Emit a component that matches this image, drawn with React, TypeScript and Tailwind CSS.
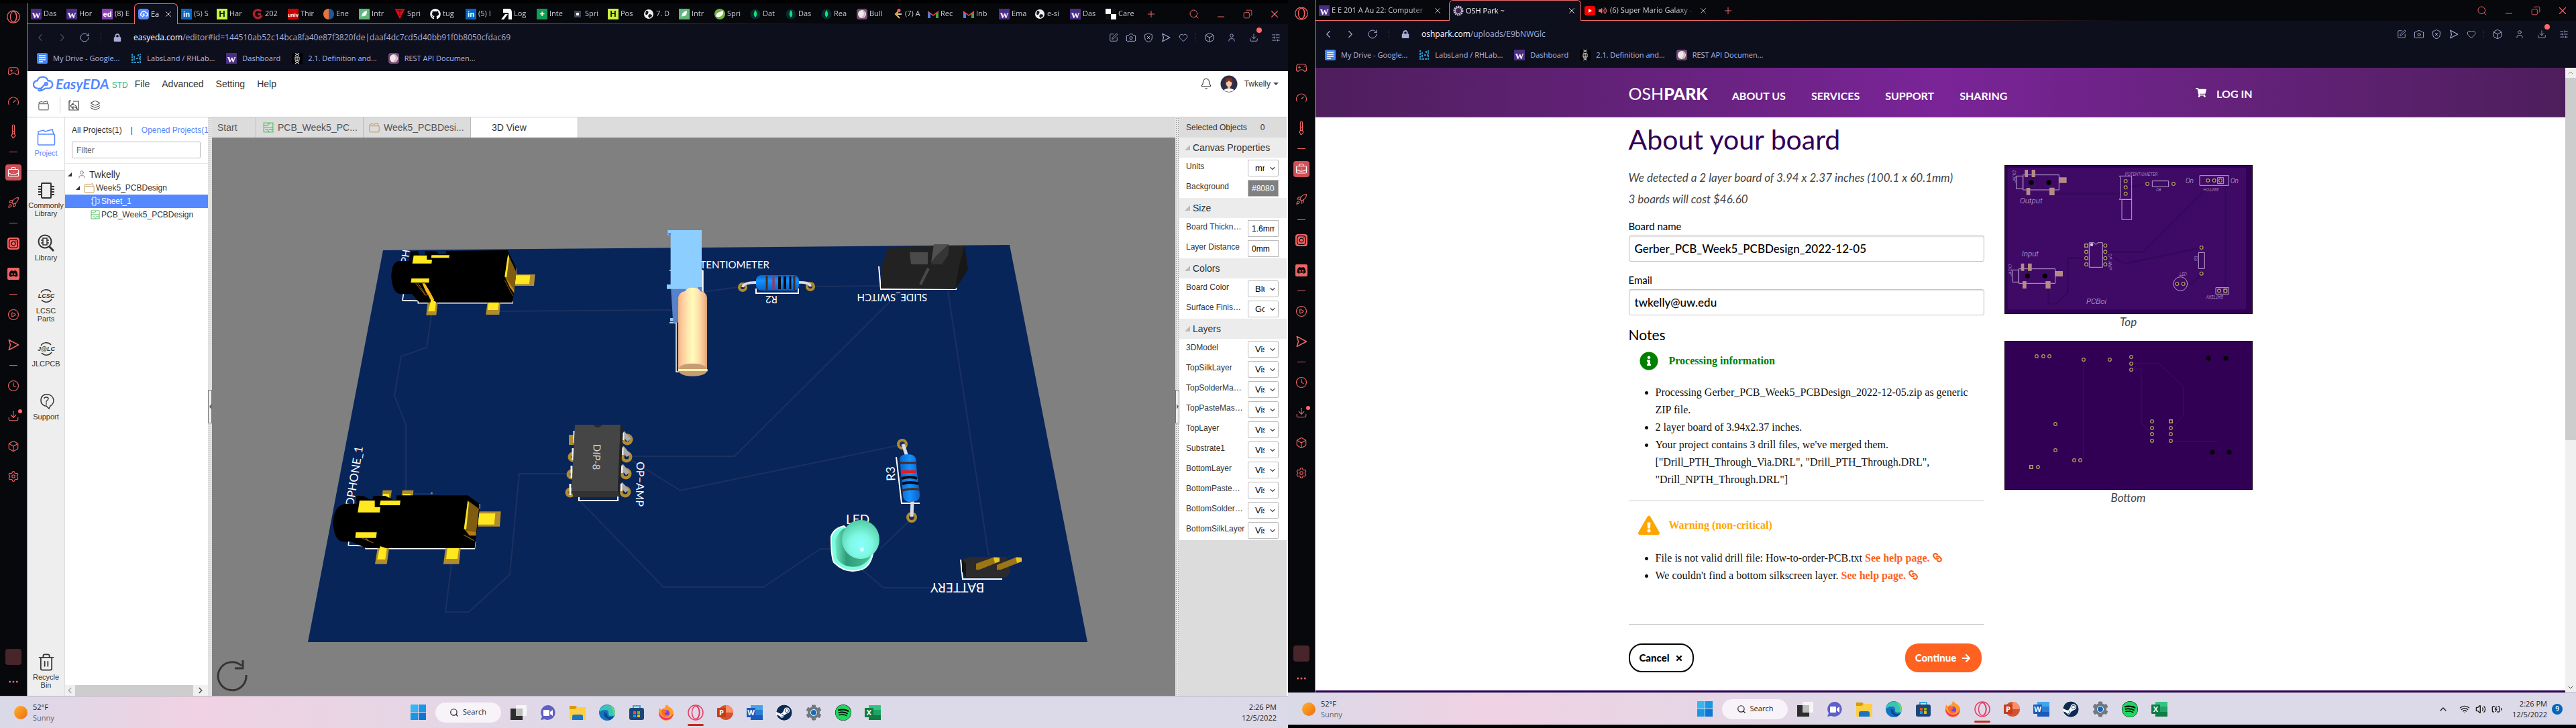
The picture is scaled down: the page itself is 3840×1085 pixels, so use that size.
import type { ReactNode } from "react";
import {
  Bell, Box, Brush, Camera, ChevronDown, ChevronLeft, ChevronRight, ChevronUp, Clock, CirclePlay, Copy,
  Download, Gamepad2, Gauge, Heart, Layers, Minus, Plus, Rocket, RotateCw, Search, Settings,
  ShieldX, SlidersHorizontal, SquarePen, Trash2, User, Volume2, Wifi, X, Ellipsis, BriefcaseBusiness,
  BatteryCharging,
} from "lucide-react";
import {
  FaArrowRight, FaDiscord, FaExclamationTriangle, FaGithub, FaInfoCircle, FaInstagram, FaLink, FaLock,
  FaShoppingCart, FaSpotify, FaSteam, FaTimes, FaVolumeUp, FaCog,
} from "react-icons/fa";

/* ---------- favicons ---------- */

function Letter({ bg, fg, children, serif }: { bg: string; fg: string; children: string; serif?: boolean }) {
  return (
    <svg viewBox="0 0 16 16" className="size-4 shrink-0" aria-hidden="true">
      <rect width="16" height="16" fill={bg} />
      <text x="8" y={serif ? 14 : 12} textAnchor="middle" fontSize={children.length > 2 ? 8 : children.length > 1 ? 11 : 13}
        fontWeight="bold" fill={fg} fontFamily={serif ? "Liberation Serif, serif" : "Liberation Sans, sans-serif"}>
        {children}
      </text>
    </svg>
  );
}

function Fav({ kind }: { kind: string }) {
  switch (kind) {
    case "uw": return <Letter bg="#4b2e83" fg="#fff" serif>W</Letter>;
    case "ed": return <Letter bg="#8b3fb5" fg="#fff">ed</Letter>;
    case "in": return <Letter bg="#0a66c2" fg="#fff">in</Letter>;
    case "hh": return <Letter bg="#c8f542" fg="#111">H</Letter>;
    case "unlv": return <Letter bg="#cc0000" fg="#fff">unlv</Letter>;
    case "sheet": return <Letter bg="#0f9d58" fg="#fff">+</Letter>;
    case "gh": return <FaGithub className="size-4 shrink-0 text-white" />;
  }
  return (
    <svg viewBox="0 0 16 16" className="size-4 shrink-0" aria-hidden="true">
      {kind === "cloud" && <>
        <rect width="16" height="16" rx="4" fill="#5588ff" />
        <path d="M5 11a3 3 0 0 1 0-5 3.5 3.5 0 0 1 6.500 0 2.500 2.500 0 0 1 0 5M7 9l2-2M6 12l4-3" fill="none" stroke="#fff" strokeWidth="1.500" />
      </>}
      {kind === "g" && <path d="M13 4a6 6 0 1 0 1 6M13 8H8" fill="none" stroke="#b0202c" strokeWidth="3.500" />}
      {kind === "ene" && <><circle cx="8" cy="8" r="8" fill="#1d5a9c" /><path d="M8 0a8 8 0 0 0 0 16z" fill="#e8743b" /></>}
      {kind === "leaf" && <><rect width="16" height="16" fill="#5fb878" /><path d="M4 13C4 6 8 4 12 3c0 6-2 9-7 8z" fill="#fff" /></>}
      {kind === "tri" && <path d="M0 0h16L8 16zM4 3h8M8 3v8" fill="#e01020" stroke="#400" strokeWidth="1" />}
      {kind === "log" && <><path d="M3 0h9q4 0 4 6v10h-5V6H3z" fill="#fff" /><path d="M6 8h4l-6 8H0z" fill="#fff" /></>}
      {kind === "square" && <><rect x="3" y="3" width="10" height="10" fill="#3c4555" /><rect x="6" y="6" width="4" height="4" fill="#fff" /></>}
      {kind === "globe" && <><circle cx="8" cy="8" r="7" fill="#eee" /><path d="M4 3q5 0 3 4t-4 1M9 8q4 0 4 3l-4 3-2-3z" fill="#15161c" /></>}
      {kind === "spring" && <><circle cx="8" cy="8" r="8" fill="#6db33f" /><path d="M3 12C1 6 7 5 13 3c1 6-3 10-9 9z" fill="#fff" /></>}
      {kind === "mongo" && <><circle cx="8" cy="8" r="7.500" fill="#082a35" /><path d="M8 2c3 4 3 8 0 11-3-3-3-7 0-11z" fill="#13e56b" /></>}
      {kind === "bull" && <><rect width="16" height="16" rx="4" fill="#7a4a78" /><circle cx="8" cy="8" r="6" fill="#efe6ea" /><path d="M10 3a6 6 0 0 1-2 10" fill="none" stroke="#bba" strokeWidth="2" /></>}
      {kind === "lc" && <><path d="M11 2L5 8l6 6" fill="none" stroke="#f7b23b" strokeWidth="2" /><path d="M7 8h7" stroke="#ccc" strokeWidth="2" /><circle cx="10" cy="2.500" r="2.500" fill="#ff5c5c" /></>}
      {kind === "gmail" && <><path d="M0 14V3l8 6 8-6v11h-4V8l-4 3-4-3v6z" fill="#ea4335" /><path d="M0 5v9h4V8z" fill="#4285f4" /><path d="M16 5v9h-4V8z" fill="#34a853" /></>}
      {kind === "care" && <><rect width="16" height="16" fill="#111" /><path d="M0 0h8v8H0zM8 8h8v8H8z" fill="#fff" /></>}
      {kind === "doc" && <><rect width="16" height="16" rx="2" fill="#4285f4" /><path d="M3 4h10M3 7h10M3 10h10M3 13h6" stroke="#fff" strokeWidth="1.500" /></>}
      {kind === "labs" && <path d="M2 1v13h12V1M5 4v7M8 8h6M11 2v3" fill="none" stroke="#2b93c4" strokeWidth="2" strokeDasharray="3 1" />}
      {kind === "def" && <><rect width="16" height="16" fill="#000" /><path d="M5 0l6 4M11 0L5 4M5 16l6-4M11 16l-6-4M5 6h6v5H5zM8 5v7" fill="none" stroke="#eee" /></>}
      {kind === "osh" && <><circle cx="8" cy="8" r="6" fill="none" stroke="#c9c0d4" strokeWidth="3" strokeDasharray="2 1" /><circle cx="8" cy="8" r="4.500" fill="#3b2350" stroke="#c9c0d4" /></>}
      {kind === "yt" && <><rect y="1" width="16" height="14" rx="3" fill="#f00" /><path d="M6 5l5 3-5 3z" fill="#fff" /></>}
    </svg>
  );
}

function OperaMark({ className }: { className: string }) {
  return (
    <svg viewBox="0 0 24 24" className={className} fill="none" stroke="currentColor" strokeWidth="1.500" aria-hidden="true">
      <circle cx="12" cy="12" r="11" /><ellipse cx="12" cy="12" rx="5.500" ry="9.500" /><path d="M14 2q8 10 0 20" />
    </svg>
  );
}

function PlaneIcon({ className }: { className: string }) {
  return (
    <svg viewBox="0 0 24 24" className={className} fill="none" stroke="currentColor" strokeWidth="2" strokeLinejoin="round" aria-hidden="true">
      <path d="M3 2l19 10L3 22l3-10z" />
    </svg>
  );
}

/* ---------- browser chrome ---------- */

type Tab = { icon: string; label: string; active?: boolean; audio?: boolean };

const railButton = "flex h-[45px] w-full items-center justify-center";

function Dash() {
  return <div className="flex h-4 items-center justify-center"><span className="h-px w-3 bg-[#e85f5f]" /></div>;
}

function OperaRail() {
  const i = "size-[18px]";
  return (
    <nav aria-label="Opera sidebar" className="flex w-10 shrink-0 flex-col bg-[#07080c] text-[#ee6464]">
      <button aria-label="Opera menu" className="flex h-10 items-center justify-center"><OperaMark className="size-5" /></button>
      <div className="h-[38px]" />
      <button aria-label="GX Corner" className={railButton}><Gamepad2 className={i} strokeWidth={1.5} /></button>
      <button aria-label="GX Control" className={railButton}><Gauge className={i} strokeWidth={1.5} /></button>
      <button aria-label="Cleaner" className={railButton}><Brush className={i + " -rotate-45"} strokeWidth={1.5} /></button>
      <Dash />
      <button aria-label="Workspace" className={railButton}>
        <span className="flex size-6 items-center justify-center rounded-sm bg-[#d15058] text-white"><BriefcaseBusiness className={i} strokeWidth={1.5} /></span>
      </button>
      <button aria-label="Launch" className={railButton}><Rocket className={i} strokeWidth={1.5} /></button>
      <Dash />
      <button aria-label="Instagram" className={railButton}><span className="rounded bg-[#ee6464] p-px text-[#07080c]"><FaInstagram className="size-4" /></span></button>
      <button aria-label="Discord" className={railButton}><span className="rounded-xs bg-[#ee6464] p-0.5 text-[#07080c]"><FaDiscord className="size-3.5" /></span></button>
      <Dash />
      <button aria-label="Player" className={railButton}><CirclePlay className={i} strokeWidth={1.5} /></button>
      <button aria-label="My Flow" className={railButton}><PlaneIcon className={i} /></button>
      <Dash />
      <button aria-label="History" className={railButton}><Clock className={i} strokeWidth={1.5} /></button>
      <button aria-label="Downloads" className={railButton}>
        <span className="relative"><Download className={i} strokeWidth={1.5} /><span className="absolute -top-px -right-1 size-1.5 rounded-full bg-[#ff6b6b]" /></span>
      </button>
      <button aria-label="Extensions" className={railButton}><Box className={i} strokeWidth={1.5} /></button>
      <button aria-label="Settings" className={railButton}><Settings className={i} strokeWidth={1.5} /></button>
      <button aria-label="Workspaces" className={railButton + " mt-auto"}><span className="size-6 rounded-sm bg-[#48242b]" /></button>
      <button aria-label="More" className="mb-1.5 flex h-[30px] items-center justify-center"><Ellipsis className="size-[18px]" /></button>
    </nav>
  );
}

const bookmarks = [
  ["doc", "My Drive - Google..."],
  ["labs", "LabsLand / RHLab..."],
  ["uw", "Dashboard"],
  ["def", "2.1. Definition and..."],
  ["bull", "REST API Documen..."],
];

function Browser({ tabs, wide, host, path, navDim, children }: {
  tabs: Tab[]; wide?: boolean; host: string; path: string; navDim?: boolean; children: ReactNode;
}) {
  const tool = "flex w-[26px] justify-center";
  return (
    <div className="flex min-h-0 flex-1">
      <OperaRail />
      <div className="flex min-w-0 flex-1 flex-col border-l border-[#f0696b] font-['Open_Sans',sans-serif]">
        <div className="relative flex h-[31px] shrink-0 bg-[#07080c] text-[11px] text-[#c9cad6]">
          <div className="absolute inset-x-0 bottom-0 h-px bg-linear-to-r from-[#f0696b] from-30% to-[#07080c] to-65%" />
          {tabs.map((t, n) => (
            <div key={n} className={
              (t.active ? "relative rounded-t-md border border-b-0 border-[#f0696b] bg-[#0d0f1c] text-white " : "") +
              (wide ? (t.active ? "w-[197px] " : "w-[199px] pr-1 ") : t.active ? "w-[65px] " : "w-[53px] ") +
              "flex shrink-0 items-center gap-0.5 pl-[5px]"
            }>
              <button className="flex min-w-0 flex-1 items-center gap-[3px] overflow-hidden whitespace-nowrap">
                <Fav kind={t.icon} />
                {t.audio && <FaVolumeUp className="mx-0.5 size-3 shrink-0 text-[#f0696b]" />}
                <span className="min-w-0 flex-1 overflow-hidden mask-r-from-80% text-left">{t.label}</span>
              </button>
              {(wide || t.active) && <button aria-label={"Close " + t.label} className="mr-1.5 shrink-0"><X className="size-3.5" strokeWidth={1.500} /></button>}
            </div>
          ))}
          <button aria-label="New tab" className="ml-3 text-[#f0696b]"><Plus className="size-4" strokeWidth={1.500} /></button>
          <div className="ml-auto flex items-center text-[#f0696b]">
            <button aria-label="Search tabs" className="flex w-10 justify-center"><Search className="size-4" strokeWidth={1.500} /></button>
            <button aria-label="Minimize" className="flex w-10 justify-center pt-2"><Minus className="size-4" strokeWidth={1.500} /></button>
            <button aria-label="Restore" className="flex w-10 justify-center"><Copy className="size-3.5 -scale-x-100" strokeWidth={1.500} /></button>
            <button aria-label="Close window" className="flex w-10 justify-center"><X className="size-[18px]" strokeWidth={1.500} /></button>
          </div>
        </div>
        <div className="flex h-[39px] shrink-0 items-center bg-[#0d0f1c] pl-0.5 text-[#a9aed8]">
          <button aria-label="Back" className={"flex w-[33px] justify-center " + (navDim ? "text-[#4a4e68]" : "")}><ChevronLeft className="size-[18px]" strokeWidth={1.500} /></button>
          <button aria-label="Forward" className={"flex w-[33px] justify-center " + (navDim ? "text-[#4a4e68]" : "")}><ChevronRight className="size-[18px]" strokeWidth={1.500} /></button>
          <button aria-label="Reload" className="flex w-[33px] justify-center"><RotateCw className="size-4" strokeWidth={1.500} /></button>
          <span className="mx-2 h-3 border-l border-dotted border-[#3a3e58]" />
          <FaLock className="mx-2.5 size-3" />
          <span className="ml-2 text-[12px]"><span className="text-white">{host}</span>{path}</span>
          <div className="ml-auto flex items-center">
            <button aria-label="Easy edit" className={tool}><SquarePen className="size-3.5" strokeWidth={1.500} /></button>
            <button aria-label="Snapshot" className={tool}><Camera className="size-4" strokeWidth={1.500} /></button>
            <button aria-label="Ad blocker" className={tool}><ShieldX className="size-4" strokeWidth={1.500} /></button>
            <button aria-label="Send" className={tool}><PlaneIcon className="size-3.5" /></button>
            <button aria-label="Pin" className={tool}><Heart className="size-3.5" strokeWidth={1.500} /></button>
            <span className="mx-1 h-3 border-l border-dotted border-[#3a3e58]" />
            <button aria-label="Extensions" className="flex w-[33px] justify-center"><Box className="size-4" strokeWidth={1.500} /></button>
            <button aria-label="Profile" className="flex w-[33px] justify-center"><User className="size-3.5" strokeWidth={1.500} /></button>
            <button aria-label="Downloads" className="relative flex w-[33px] justify-center"><Download className="size-3.5" strokeWidth={1.500} /><span className="absolute -top-2 right-1 size-2 rounded-full bg-[#ff6b6b]" /></button>
            <button aria-label="Easy setup" className="flex w-[33px] justify-center"><SlidersHorizontal className="size-3.5" strokeWidth={1.500} /></button>
            <span className="w-0.5" />
          </div>
        </div>
        <div className="flex h-[31px] shrink-0 items-start gap-[17px] bg-[#0d0f1c] pt-1 pl-3.5 text-[11px] leading-4 text-[#b4b8e0]">
          {bookmarks.map(([k, l]) => (
            <a key={l} href="#bookmark" className="flex items-center gap-2"><Fav kind={k} />{l}</a>
          ))}
        </div>
        {children}
      </div>
    </div>
  );
}

/* ---------- taskbar ---------- */

function OfficeIcon({ letter, dark, mid, light, round }: { letter: string; dark: string; mid: string; light: string; round?: boolean }) {
  return (
    <svg viewBox="0 0 24 24" className="size-6" aria-hidden="true">
      {round ? <><circle cx="13" cy="12" r="11" fill={mid} /><path d="M13 1a11 11 0 0 1 11 11H13z" fill={light} /></>
        : <><rect x="6" y="1" width="18" height="22" rx="1" fill={mid} /><rect x="6" y="1" width="18" height="7" fill={light} /><rect x="6" y="16" width="18" height="7" fill={dark} /></>}
      <rect y="5" width="13" height="14" rx="1" fill={dark} />
      <text x="6.500" y="16" textAnchor="middle" fontSize="11" fontWeight="bold" fill="#fff" fontFamily="Open Sans, sans-serif">{letter}</text>
    </svg>
  );
}

const apps: [string, ReactNode][] = [
  ["Task view", <svg viewBox="0 0 24 24" className="size-6"><rect x="8" y="1" width="16" height="16" fill="#f6f6f6" /><rect y="6" width="18" height="17" fill="#2c2c2c" /><rect x="8" y="6" width="10" height="11" fill="#bdbdbd" /></svg>],
  ["Chat", <svg viewBox="0 0 24 24" className="size-6"><path d="M12 1a11 11 0 1 1-5 21l-6 1 2-5A11 11 0 0 1 12 1z" fill="#5f5fc4" /><rect x="5" y="8" width="9" height="9" rx="1" fill="#fff" /><path d="M15 11l4-3v9l-4-3z" fill="#fff" /></svg>],
  ["File Explorer", <svg viewBox="0 0 24 24" className="size-6"><path d="M0 2h9l3 3h12v6H0z" fill="#d99a00" /><path d="M0 7h8l3-3h13v19H0z" fill="#fdcf45" /><path d="M4 23v-5q0-3 3-3h10q3 0 3 3v5z" fill="#1976c5" /></svg>],
  ["Edge", <svg viewBox="0 0 24 24" className="size-6"><circle cx="12" cy="12" r="12" fill="#1573c4" /><path d="M1 8A12 12 0 0 1 24 12q0 5-6 5-4 0-4-3 1-6-5-6-5 0-8 3z" fill="#38c6b4" /><path d="M8 11q-3 8 8 12a12 12 0 0 0 6-5q-10 3-10-4z" fill="#0c4a90" /><path d="M15 1a12 12 0 0 1 9 11q0 4-3 5 2-9-6-16z" fill="#6fdc68" /></svg>],
  ["Microsoft Store", <svg viewBox="0 0 24 24" className="size-6"><path d="M7 7V2h10v5" fill="none" stroke="#2fa8e8" strokeWidth="2" /><rect x="1" y="5" width="22" height="18" rx="3" fill="#1c4678" /><path d="M7 10h4v4H7z" fill="#f25022" /><path d="M13 10h4v4h-4z" fill="#7fba00" /><path d="M7 15h4v4H7z" fill="#00a4ef" /><path d="M13 15h4v4h-4z" fill="#ffb900" /></svg>],
  ["Firefox", <svg viewBox="0 0 24 24" className="size-6"><path d="M2 5l3 3q2-3 5-3 0-3 3-5 3 4 6 5 4 3 4 8a11 11 0 0 1-22 0q0-5 1-8z" fill="#ff9a2e" /><path d="M1 11a11 11 0 0 0 22 2q-4 8-12 7-7-1-10-9z" fill="#f0346c" /><circle cx="12" cy="13" r="5" fill="#7543e0" /><path d="M5 8q5-2 8 2-1 3-4 3 3 4 8 2-5 6-10 1-3-4-2-8z" fill="#ff6a2a" /></svg>],
  ["Opera GX", <OperaMark className="size-6 text-[#ee3a63]" />],
  ["PowerPoint", <OfficeIcon letter="P" dark="#c43e1c" mid="#d35230" light="#ff8f6b" round />],
  ["Word", <OfficeIcon letter="W" dark="#185abd" mid="#2b7cd3" light="#41a5ee" />],
  ["Steam", <FaSteam className="size-6 rounded-full bg-white text-[#0d2a52]" />],
  ["Settings", <span className="relative flex size-6 items-center justify-center"><FaCog className="size-6 text-[#707880]" /><span className="absolute size-2.5 rounded-full border border-white bg-[#1568b8]" /></span>],
  ["Spotify", <FaSpotify className="size-6 rounded-full bg-black text-[#1ed760]" />],
  ["Excel", <OfficeIcon letter="X" dark="#107c41" mid="#21a366" light="#33c481" />],
];

function Taskbar({ tray }: { tray?: boolean }) {
  return (
    <footer className="flex h-12 shrink-0 items-center border-t border-[#b5b1c2] bg-linear-to-r from-[#d9d9e8] via-[#f0d2e3] via-15% to-[#dcdae8] to-48% font-['Open_Sans',sans-serif] text-[12px] text-[#1c1c1c]">
      <div className="flex flex-1 items-center gap-2 pl-[21px]">
        <span className="size-5 rounded-full bg-linear-to-br from-[#f7b32d] to-[#f26a0c]" />
        <div className="text-[11px] leading-4"><div>52°F</div><div className="text-[#66646e]">Sunny</div></div>
      </div>
      <div className="flex items-center gap-5">
        <button aria-label="Start" className="grid grid-cols-2 gap-px">
          <span className="size-[11px] bg-[#35b6f0]" /><span className="size-[11px] bg-[#1a97e4]" />
          <span className="size-[11px] bg-[#1a97e4]" /><span className="size-[11px] bg-[#0c76d2]" />
        </button>
        <button className="-mx-1.5 flex h-[30px] w-[98px] items-center justify-center gap-1.5 rounded-full bg-[#f8f2f9] text-[11px]"><Search className="size-3.5" />Search</button>
        {apps.map(([name, icon]) => (
          <button key={name} aria-label={name} className="relative">
            {icon}
            {name === "Opera GX" && <span className="absolute inset-x-0 -bottom-2 h-[3px] rounded-full bg-[#c42b1c]" />}
          </button>
        ))}
      </div>
      <div className={"flex flex-1 items-center justify-end gap-[7px] text-right text-[11px] " + (tray ? "pr-5" : "pr-[17px]")}>
        {tray && (
          <div className="mr-2 flex items-center gap-2">
            <ChevronUp className="mr-2 size-4" /><Wifi className="size-4" /><Volume2 className="size-4" /><BatteryCharging className="size-4" />
          </div>
        )}
        <div className="leading-4"><div>2:26 PM</div><div>12/5/2022</div></div>
        {tray && <span className="flex size-4 items-center justify-center rounded-full bg-[#0067c0] text-[10px] font-semibold text-white">9</span>}
      </div>
    </footer>
  );
}

/* ---------- EasyEDA ---------- */

function Jack({ first }: { first?: boolean }) {
  return first ? (
    <g transform="translate(560 335) scale(.33333)">
      <path d="M125 305L120 338L190 340V350H612V340M628 195V250" fill="none" stroke="#fff" strokeWidth="5" />
      <path d="M624 222H713L708 273H620zM233 345H278L271 404H226zM500 345H558L553 402H493z" fill="#b08c2e" />
      <path d="M626 226H691L687 265H622zM505 343H552L547 381H500z" fill="#ffe81f" />
      <path d="M150 162H105Q70 165 70 235Q75 305 110 310H162L195 347L612 347L629 212V195L590 114L315 117V132H282L274 119L220 118V134H195L188 117L157 120z" fill="#000" />
      <path d="M170 137H229V156H252L250 173H164zM250 136H330L328 148H248zM160 240H240L238 259H157z" fill="#ffe81f" />
      <path d="M592 132L629 212L619 300L577 232z" fill="#805c10" />
      <path d="M592 132L597 145L586 235L577 232z" fill="#ffe81f" />
      <path d="M578 232L619 290V305L600 280z" fill="#c98714" />
      <path d="M577 248L614 318" stroke="#805c10" strokeWidth="3" />
      <path d="M208 262H220L240 295L262 335L250 345L235 315L225 300z" fill="#ffb81c" />
      <path d="M248 332L270 345L265 387H235z" fill="#ffe81f" />
      <path d="M180 262L222 315L240 312M190 262L222 312" fill="none" stroke="#a87710" strokeWidth="3" />
    </g>
  ) : (
    <g transform="translate(480 625) scale(.33333)">
      <path d="M120 545L118 563L195 566V578H682L686 545M704 378V400" fill="none" stroke="#fff" strokeWidth="5" />
      <path d="M272 317H312L307 350H268zM360 317H409L407 345H355zM704 412H800L795 479H698zM248 577H300L290 647H237zM552 577H620L613 647H543z" fill="#b08c2e" />
      <path d="M274 333H300V350H270zM363 333H396V345H361zM703 421H775L770 470H697zM561 575H612L606 624H555z" fill="#ffe81f" />
      <path d="M155 377H105Q52 385 50 465Q55 545 95 547H130L198 576H683L704 400V378L652 340H333V360H318L283 342H228L226 358H212L186 343H152z" fill="#000" />
      <path d="M168 363H236V392H261L258 416H160zM262 363H351L348 384H258zM151 505H245L242 530H149z" fill="#ffe81f" />
      <path d="M652 363L702 400L688 520L655 515L635 490z" fill="#805c10" />
      <path d="M652 363L657 372L645 492L635 490z" fill="#ffe81f" />
      <path d="M645 497L688 505V520H660z" fill="#b87b15" />
      <path d="M633 516L680 542M178 531L230 552M195 531L212 545" stroke="#805c10" strokeWidth="4" />
      <path d="M260 567L290 577L283 626H247z" fill="#ffe81f" />
    </g>
  );
}

function BoardScene() {
  const silk = { fill: "#fff", fontSize: 15, fontFamily: "Lato, sans-serif" };
  return (
    <svg viewBox="316 205 1436 832" className="block h-full w-full" role="img" aria-label="3D view of the circuit board">
      <defs>
        <linearGradient id="res" x2="0" y2="1"><stop stopColor="#0a62c9" /><stop offset=".35" stopColor="#1492ff" /><stop offset="1" stopColor="#0a62c9" /></linearGradient>
        <linearGradient id="resv"><stop stopColor="#0a62c9" /><stop offset=".5" stopColor="#1492ff" /><stop offset="1" stopColor="#0a62c9" /></linearGradient>
        <linearGradient id="shaft"><stop stopColor="#efb487" /><stop offset=".15" stopColor="#ffcc9c" /><stop offset=".35" stopColor="#ffeab0" /><stop offset=".5" stopColor="#fffbb8" /><stop offset=".7" stopColor="#ffe3ab" /><stop offset=".9" stopColor="#f5bb8e" /><stop offset="1" stopColor="#d9a070" /></linearGradient>
        <radialGradient id="led" cx=".5" cy=".65" r=".65"><stop stopColor="#8affff" /><stop offset=".45" stopColor="#7ff8e4" /><stop offset="1" stopColor="#52cda0" /></radialGradient>
        <linearGradient id="ledb"><stop stopColor="#6fe8c8" /><stop offset=".3" stopColor="#2f9c78" /><stop offset="1" stopColor="#4cc49a" /></linearGradient>
        <clipPath id="board"><path d="M571 373L1505 365L1621 957H459z" /></clipPath>
      </defs>
      <path d="M571 373L1505 365L1621 957H459z" fill="#08255a" />
      <path d="M643 470L636 518L598 531L588 590L605 633V730M745 464L1000 462M845 706H774L760 856L699 912H664L673 841M863 745L989 875H1138L1223 818H1238M1312 818L1358 774M944 680H1095L1340 436M940 685L1014 731L1343 663M1413 434L1474 829M1049 435L1107 427M1211 427L1312 426M1284 848L1317 876H1389M617 736H643"
        fill="none" stroke="#1b315f" strokeWidth="2" />
      <circle cx="643.500" cy="735" r="1.500" fill="#b08c2e" />

      <text {...silk} textAnchor="end" x="1147" y="400">POTENTIOMETER</text>
      <text {...silk} textAnchor="middle" transform="translate(1150 441) rotate(180)">R2</text>
      <text {...silk} textAnchor="middle" transform="translate(1330 438) rotate(180)">SLIDE_SWITCH</text>
      <text {...silk} textAnchor="middle" transform="translate(1427 869) rotate(180)" fontSize="19">BATTERY</text>
      <text {...silk} textAnchor="middle" transform="translate(1334 706) rotate(-92)" fontSize="18">R3</text>
      <text {...silk} x="1261" y="781" fontSize="19">LED</text>
      <text {...silk} textAnchor="end" transform="translate(541 666) rotate(-81)" fontSize="17">DPHONE_1</text>
      <g clipPath="url(#board)"><text {...silk} transform="translate(608 393) rotate(-82)">PHO</text></g>
      <text {...silk} transform="translate(949 688) rotate(91)" fontSize="16">OP−AMP</text>

      <Jack first />
      <Jack />

      <path d="M998 403H1047V434M1048 403V436M998 481H1008V554H1012" fill="none" stroke="#fff" strokeWidth="1.500" />
      <g transform="translate(560 335) scale(.33333)">
        <path d="M1320 280H1458V437H1330z" fill="#5781c9" />
        <path d="M1306 24H1458V280H1440V287H1302V267H1319V46H1306z" fill="#8cceff" />
        <path d="M1306 37H1320V46H1312z" fill="#5781c9" />
        <path d="M1317 417H1330V432H1317z" fill="#8cceff" />
        <path d="M1353 655V325Q1360 300 1384 297Q1390 281 1418 281T1452 297Q1478 300 1482 325V655z" fill="url(#shaft)" />
        <path d="M1353 655Q1353 620 1418 620T1483 655Q1470 677 1418 677T1353 655z" fill="#c89d74" />
        <path d="M1353 645H1484V654H1353z" fill="#fff4ae" />
      </g>

      <path d="M1127 430V437H1190V430" fill="none" stroke="#fff" strokeWidth="2" />
      <g fill="none" stroke="#b08c2e" strokeWidth="4"><circle cx="1107" cy="428" r="5" /><circle cx="1208" cy="427" r="5" /></g>
      <path d="M1107 428Q1108 421 1128 421M1208 427Q1208 420 1188 421" fill="none" stroke="#dcdce2" strokeWidth="4" />
      <g transform="translate(1127 410)">
        <rect width="64" height="23" rx="8" fill="url(#res)" />
        <path d="M16 1V22M57 1V22" stroke="#4a2a18" strokeWidth="3" /><path d="M26 2V21" stroke="#e01c24" strokeWidth="3" /><path d="M35 2V21M43 2V21" stroke="#0b0b14" strokeWidth="4" /><path d="M51 2V21" stroke="#0b0b14" strokeWidth="3" />
      </g>

      <g transform="translate(1335 677)">
        <path d="M1 4L9 73H36" fill="none" stroke="#fff" strokeWidth="2" />
        <circle cx="10" cy="-15" r="6" fill="#1b315f" stroke="#b08c2e" strokeWidth="4" /><circle cx="24" cy="94" r="6" fill="#1b315f" stroke="#b08c2e" strokeWidth="4" />
        <path d="M11 -15L17 3M25 70L24 93" stroke="#dcdce2" strokeWidth="5" />
        <path d="M6 6Q8 0 18 0T30 6L31 20L36 60Q37 70 24 71T11 60z" fill="url(#resv)" />
        <path d="M6 13H30M10 54Q24 50 36 53" fill="none" stroke="#4a2a18" strokeWidth="3" /><path d="M9 26H31" stroke="#e01c24" strokeWidth="4" /><path d="M9 36Q22 32 32 36M10 44Q22 40 34 44" fill="none" stroke="#0b0b14" strokeWidth="4" />
      </g>

      <path d="M1310 397L1313 431H1425V428" fill="none" stroke="#fff" strokeWidth="2" />
      <path d="M1324 368L1438 366L1443 402L1424 431L1313 430V400z" fill="#222" />
      <path d="M1438 366L1443 402L1424 431L1429 400z" fill="#171717" />
      <path d="M1356 376H1383V394H1358z" fill="#4a4a4a" /><path d="M1392 364H1414L1413 381H1396L1388 392z" fill="#505050" /><path d="M1414 364L1413 381L1404 394H1388L1396 381z" fill="#353535" />
      <path d="M1384 400L1372 424" stroke="#4a4a4a" strokeWidth="4" />

      <g fill="none" stroke="#b08c2e" strokeWidth="5">
        <circle cx="935" cy="655" r="6" /><circle cx="934" cy="681" r="6" /><circle cx="933" cy="706" r="6" /><circle cx="932" cy="733" r="6" />
        <circle cx="854" cy="681" r="5" /><circle cx="852" cy="707" r="5" /><circle cx="850" cy="734" r="5" />
      </g>
      <path d="M848 648H858V663H848z" fill="#b08c2e" />
      <path d="M863 740V746H921V740" fill="none" stroke="#fff" strokeWidth="2" />
      <path d="M928 645L938 656M927 667L937 679M926 694L936 706M925 721L935 732" stroke="#a9a9ad" strokeWidth="7" />
      <path d="M929 645V656M928 667V678M927 694V705M926 721V732M856 642V660M854 668V686M852 694V712M850 721V738" stroke="#f2f2f2" strokeWidth="3" />
      <path d="M857 633H925L921 732H852z" fill="#454545" /><path d="M925 633L929 637L924 738L921 732z" fill="#222" /><path d="M852 732H921L924 738L918 741H855z" fill="#333" />
      <path d="M884 633Q891 641 898 633z" fill="#2a2a2a" />
      <text textAnchor="middle" fontSize="15" fontFamily="Lato, sans-serif" fill="#d5d5d5" transform="translate(884 681) rotate(92)">DIP-8</text>

      <path d="M1239 800Q1242 788 1258 784L1302 820Q1299 842 1286 848Q1262 857 1243 838Q1239 830 1239 800z" fill="#7dfce0" stroke="#fff" strokeWidth="2" />
      <path d="M1245 806Q1250 790 1262 786L1301 820Q1297 838 1280 844Q1258 848 1247 832z" fill="url(#ledb)" />
      <ellipse cx="1283" cy="804" rx="28" ry="29" fill="url(#led)" /><circle cx="1285" cy="819" r="3" fill="#d8ffff" />

      <path d="M1432 834L1435 863H1494" fill="none" stroke="#fff" strokeWidth="2" />
      <path d="M1434 834L1446 830H1500L1505 840V855L1500 860H1440L1434 850z" fill="#2b2b2d" /><path d="M1434 834L1440 840V860L1434 852z" fill="#141414" />
      <path d="M1455 840L1483 830L1490 831V837L1460 849H1455zM1486 842L1516 830L1523 831V837L1492 849H1486z" fill="#9c7514" />
      <path d="M1481 831H1490V837L1483 839zM1514 831H1523V837L1516 839z" fill="#e8c52a" />

      <path d="M367 1006A21 21 0 1 1 360 992M362 984V996H350" fill="none" stroke="#353535" strokeWidth="3" />
    </svg>
  );
}

function SelectBox({ id, value }: { id: string; value: string }) {
  return (
    <div className="relative h-[25px] w-[46px] rounded-xs border border-[#bbb] bg-white">
      <select id={id} defaultValue={value} className="h-full w-6 appearance-none overflow-hidden pl-2.5 text-[13px] text-clip text-black outline-none">
        <option>{value}</option>
      </select>
      <ChevronDown className="pointer-events-none absolute top-1.5 right-0.5 size-3 text-[#555]" strokeWidth={2.500} />
    </div>
  );
}

function Row({ label, children }: { label: string; children: ReactNode }) {
  return (
    <div className="flex h-[30px] items-start justify-between bg-white pt-[3px] pr-3 pl-2.5">
      <label htmlFor={"p-" + label} className="min-w-0 leading-5 whitespace-nowrap">{label}</label>
      <div className="shrink-0">{children}</div>
    </div>
  );
}

function Group({ title, children }: { title: string; children: ReactNode }) {
  return (
    <section>
      <h3 className="flex h-[30px] items-center gap-1 bg-[#ececec] pl-2 text-[14px] font-normal">
        <svg viewBox="0 0 8 8" className="size-2" aria-hidden="true"><path d="M8 0v8H0z" fill="#bbb" /></svg>{title}
      </h3>
      {children}
    </section>
  );
}

function PcbIcon({ className }: { className: string }) {
  return (
    <svg viewBox="0 0 14 14" className={className} fill="none" stroke="#4fc05a" aria-hidden="true">
      <rect x="1" y="1" width="12" height="12" /><path d="M1 4h5l3-3M1 7h12M3 10h3l2 3M8 10h5" />
    </svg>
  );
}

function FolderIcon({ className }: { className: string }) {
  return (
    <svg viewBox="0 0 28 28" className={className} fill="none" stroke="currentColor" strokeWidth="1.500" aria-hidden="true">
      <rect x="1.500" y="10" width="25" height="16" rx="1.500" /><path d="M2 10V6l8-2 2 2 11-3 2 7" />
    </svg>
  );
}

const railLabel = "flex h-[79px] w-full flex-col items-center gap-0.5 pt-[15px] text-center text-[11px] leading-3";

function Splitter({ side }: { side: "left" | "right" }) {
  return (
    <div className="flex w-1.5 shrink-0 items-center bg-[#e6e6e6] bg-[radial-gradient(#999_1px,transparent_1px)] bg-[size:3px_3px]">
      <button aria-label={"Collapse " + side + " panel"} className="flex h-[50px] w-full items-center justify-center border border-[#777] bg-[#eee] text-[8px] text-[#555]">
        <span className={"border-y-4 border-y-transparent " + (side === "left" ? "border-r-3 border-r-[#666]" : "border-l-3 border-l-[#666]")} />
      </button>
    </div>
  );
}

const layers = ["3DModel", "TopSilkLayer", "TopSolderMa…", "TopPasteMas…", "TopLayer", "Substrate1", "BottomLayer", "BottomPaste…", "BottomSolder…", "BottomSilkLayer"];

function EasyEda() {
  const docTab = "flex h-full items-center gap-1.5 border-r border-[#bbb] text-[14px] text-[#555]";
  const propInput = "h-[25px] w-[46px] border border-[#bbb] px-[5px] text-[12px] ";
  return (
    <div className="flex min-h-0 flex-1 flex-col bg-white pr-0.5 font-['Liberation_Sans',Arial,sans-serif] text-[12px] text-[#333]">
      <header className="flex h-[69px] shrink-0 flex-col border-b border-[#ccc]">
        <div className="flex h-[38px] items-center pr-3 pl-2">
          <svg viewBox="0 0 34 24" className="h-6 w-8 text-[#5588ff]" fill="none" stroke="currentColor" strokeWidth="2.500" aria-hidden="true">
            <path d="M8 19H7a6 6 0 0 1 0-12 9 9 0 0 1 17 0 6 6 0 0 1 2 12h-6l-7 4M13 19l7-7" /><circle cx="21" cy="12" r="2" /><circle cx="11" cy="21" r="2" />
          </svg>
          <span className="ml-0.5 font-['Lato',sans-serif] text-[21px] font-bold text-[#5588ff] italic">EasyEDA</span>
          <span className="ml-1 pt-1 text-[12px] text-[#35b58c]">STD</span>
          <nav className="ml-2.5 flex gap-[18px] text-[14px]">
            <button>File</button><button>Advanced</button><button>Setting</button><button>Help</button>
          </nav>
          <button aria-label="Notifications" className="ml-auto"><Bell className="size-[18px]" strokeWidth={1.500} /></button>
          <svg viewBox="0 0 26 26" className="ml-3 size-[26px]" aria-hidden="true">
            <circle cx="13" cy="13" r="12.500" fill="#2c2e48" /><path d="M5 22q8-5 16 0a12 12 0 0 1-16 0z" fill="#fff" /><path d="M11 14h4v6h-4z" fill="#e6ad90" /><ellipse cx="13" cy="12" rx="4.500" ry="5.500" fill="#f4c3a8" /><path d="M8 11q-1-8 6-7 6 1 4 7-4-1-5-3-2 3-5 3z" fill="#7a3418" />
          </svg>
          <button className="ml-2.5 flex items-center gap-1">Twkelly<span className="border-x-4 border-t-4 border-x-transparent border-t-[#444]" /></button>
        </div>
        <div className="flex items-center pl-4">
          <button aria-label="Open"><FolderIcon className="size-4" /></button>
          <span className="mr-3 ml-4 h-[25px] border-l border-[#ccc]" />
          <button aria-label="Home view">
            <svg viewBox="0 0 16 16" className="size-4" fill="none" stroke="#444" strokeWidth="1.200" aria-hidden="true"><path d="M1 1v14h14V2H7M1 1h3M1 3h2M3 9l4-4v2q5 0 6 6-3-3-6-3v3z" /></svg>
          </button>
          <button aria-label="Layers" className="ml-4"><Layers className="size-4" strokeWidth={1.500} /></button>
        </div>
      </header>
      <div className="flex min-h-0 flex-1">
        <nav aria-label="Panels" className="flex w-14 shrink-0 flex-col border-r border-[#ddd] bg-[#eee]">
          <button className={railLabel + " bg-white text-[#5588ff]"}><FolderIcon className="size-7 shrink-0" /><span className="pt-0.5">Project</span></button>
          <button className={railLabel + " border-t border-[#ccc]"}>
            <svg viewBox="0 0 28 28" className="size-7 shrink-0" fill="none" stroke="currentColor" strokeWidth="2" aria-hidden="true"><rect x="7" y="3" width="14" height="22" rx="1" /><path d="M7 8H2M7 12H2M7 16H2M7 20H2M21 8h5M21 12h5M21 16h5M21 20h5" /></svg>
            <span>Commonly<br />Library</span>
          </button>
          <button className={railLabel}>
            <svg viewBox="0 0 28 28" className="size-7 shrink-0" fill="none" stroke="currentColor" strokeWidth="2" aria-hidden="true"><circle cx="12" cy="12" r="9.500" /><path d="M18 19l7 7" strokeWidth="3" /><path d="M9 7h6v10H9zM9 10H6M9 14H6M15 10h3M15 14h3" strokeWidth="1.500" /></svg>
            Library
          </button>
          {["LCSC", "J@LC"].map((t) => (
            <button key={t} className={railLabel}>
              <svg viewBox="0 0 30 28" className="h-7 w-[30px] shrink-0" aria-hidden="true"><path d="M7 9a9.500 9.500 0 0 1 15-1M23 19a9.500 9.500 0 0 1-15 1" fill="none" stroke="#333" strokeWidth="1.500" /><text x="15" y="17" textAnchor="middle" fontSize="9" fontStyle="italic" fontWeight="bold" fill="#333">{t}</text></svg>
              {t === "LCSC" ? <span>LCSC<br />Parts</span> : <span>JLCPCB</span>}
            </button>
          ))}
          <button className={railLabel}>
            <svg viewBox="0 0 28 28" className="size-7 shrink-0" fill="none" stroke="currentColor" strokeWidth="1.500" aria-hidden="true"><path d="M12 3h4a9 9 0 0 1 4 17l-2 4-4-4h-2A9 9 0 0 1 12 3zM11 9q0-2 3-2t3 2q0 2-3 4v2M14 16v2" /></svg>
            Support
          </button>
          <button className={railLabel + " mt-auto"}><Trash2 className="size-7 shrink-0" strokeWidth={1.500} /><span>Recycle<br />Bin</span></button>
        </nav>
        <aside className="flex w-[213px] shrink-0 flex-col">
          <div className="h-[69px] border-b border-[#e6e6e6] pt-2.5 pl-2.5">
            <div className="flex gap-[13px] overflow-hidden whitespace-nowrap"><button>All Projects(1)</button><span>|</span><button className="text-[#5588ff]">Opened Projects(1)</button></div>
            <label htmlFor="filter" className="sr-only">Filter</label>
            <input id="filter" placeholder="Filter" className="mt-2 h-[25px] w-48 rounded-xs border border-[#bbb] pl-1.5 placeholder-[#666]" />
          </div>
          <div className="flex flex-col items-stretch pt-1.5 text-left text-[#333]">
            <button className="flex h-5 items-center gap-1 pl-1 text-[14px]"><svg viewBox="0 0 6 6" className="size-1.5 fill-[#333]"><path d="M6 0v6H0z" /></svg><User className="ml-1 size-3.5 text-[#777]" strokeWidth={1.500} />Twkelly</button>
            <button className="flex h-5 items-center gap-1 pl-4"><svg viewBox="0 0 6 6" className="size-1.5 fill-[#333]"><path d="M6 0v6H0z" /></svg><FolderIcon className="ml-0.5 -mr-1 size-4 text-[#c28a3a]" /><span className="pl-0.5">Week5_PCBDesign</span></button>
            <button className="flex h-5 items-center gap-0.5 bg-[#5588ff] pl-[38px] text-white">
              <svg viewBox="0 0 14 14" className="size-3.5" fill="none" stroke="currentColor"><path d="M3 1h5v12H3zM10 4h3v6h-3M3 4H1M3 10H1" /></svg>Sheet_1
            </button>
            <button className="flex h-5 items-center gap-0.5 pl-[38px]"><PcbIcon className="size-3.5" />PCB_Week5_PCBDesign</button>
          </div>
          <div className="mt-auto flex h-4 items-center justify-between bg-[#f0f0f0] text-[#555]">
            <ChevronLeft className="size-3.5 text-[#aaa]" strokeWidth={3} /><span className="ml-px h-full flex-1 bg-[#cdcdcd]" /><ChevronRight className="mx-1 size-3.5" strokeWidth={3} />
          </div>
        </aside>
        <Splitter side="left" />
        <main className="flex min-w-0 flex-1 flex-col bg-[#808080]">
          <div className="flex h-[30px] shrink-0 bg-[#dcdcdc]">
            <button className={docTab + " w-[66px] pl-2"}>Start</button>
            <button className={docTab + " w-40 pl-2.5"}><PcbIcon className="size-4" />PCB_Week5_PC...</button>
            <button className={docTab + " w-40 pl-2"}><FolderIcon className="size-4 text-[#c28a3a]" />Week5_PCBDesi...</button>
            <button className={docTab + " w-40 bg-white pl-[31px] !text-[#333]"}>3D View</button>
          </div>
          <div className="min-h-0 flex-1"><BoardScene /></div>
        </main>
        <Splitter side="right" />
        <aside className="w-40 shrink-0 bg-[#dcdcdc]">
          <div className="flex h-[30px] items-center gap-5 pl-2.5"><span>Selected Objects</span><span>0</span></div>
          <Group title="Canvas Properties">
            <Row label="Units"><SelectBox id="p-Units" value="mm" /></Row>
            <Row label="Background"><input id="p-Background" defaultValue="#808080" className={propInput + "bg-[#808080] text-white"} /></Row>
          </Group>
          <Group title="Size">
            <Row label="Board Thickn…"><input id="p-Board Thickn…" defaultValue="1.6mm" className={propInput + "text-black"} /></Row>
            <Row label="Layer Distance"><input id="p-Layer Distance" defaultValue="0mm" className={propInput + "text-black"} /></Row>
          </Group>
          <Group title="Colors">
            <Row label="Board Color"><SelectBox id="p-Board Color" value="Blue" /></Row>
            <Row label="Surface Finis…"><SelectBox id="p-Surface Finis…" value="Gold" /></Row>
          </Group>
          <Group title="Layers">
            {layers.map((l) => <Row key={l} label={l}><SelectBox id={"p-" + l} value="Visible" /></Row>)}
          </Group>
        </aside>
      </div>
    </div>
  );
}

/* ---------- OSH Park ---------- */

function TopBoard() {
  const holes: [number, number][] = [[566, 90], [566, 118], [566, 146], [663, 102], [780, 102], [934, 87], [962, 87], [990, 87], [390, 378], [390, 406], [390, 434], [390, 462], [475, 378], [475, 406], [475, 434], [475, 462], [905, 387], [905, 503], [796, 549], [824, 549], [984, 580], [1012, 580]];
  return (
    <svg viewBox="24 18 1110 666" className="block w-full" role="img" aria-label="Top of board">
      <rect x="24" y="18" width="1110" height="666" fill="#0c0014" />
      <rect x="27" y="21" width="1104" height="660" fill="#310055" />
      <rect x="38" y="30" width="1066" height="634" fill="#3f0a66" />
      <path d="M240 146H566M566 118L663 102M475 406H643L962 87M475 406L558 460L905 387M990 87L1013 110V580M390 434H308V588L256 638H220V550M850 549H862L905 503" fill="none" stroke="#35085a" strokeWidth="8" />
      <g fill="none" stroke="#b9a3cc" strokeWidth="3">
        <path d="M107 62H268V129H107zM77 67H107V124H77zM88 482H251V547H88zM60 487H88V541H60zM538 67H593V172H538L544 160V75zM549 172H593V262H549zM685 89H758V115H685zM897 65H1027V109H897zM403 365H425Q433 380 441 365H463V475H403zM892 409H919V481H892zM969 566H1027V595H969zM977 74H1004V101H977z" />
        <circle cx="811" cy="549" r="31" />
      </g>
      <circle cx="414" cy="374" r="7" fill="#d8c9e6" />
      <path d="M115 39H129V72H115zM146 39H162V72H146zM122 120H139V152H122zM225 119H248V153H225zM268 73H302V98H268zM98 458H112V491H98zM129 458H146V491H129zM105 537H122V570H105zM208 537H230V570H208zM251 492H285V516H251z" fill="#b48c84" />
      <path d="M381 369H399V387H381zM1003 571H1021V589H1003z" fill="#b48c84" />
      {holes.map(([x, y]) => <circle key={x + "-" + y} cx={x} cy={y} r="7" fill="#000" stroke="#b99478" strokeWidth="4" />)}
      {[[144, 96], [222, 96], [127, 514], [205, 514]].map(([x, y]) => <circle key={x} cx={x} cy={y} r="11" fill="#000" />)}
      <g fill="#c9b6d8" fontFamily="Roboto, sans-serif" fontWeight="300">
        <g fontSize="35">
          <text x="93" y="190">Output</text><text x="101" y="427">Input</text><text x="390" y="639">PCBoi</text>
          <text x="834" y="98" fontSize="30">On</text><text x="1035" y="98" fontSize="30">On</text>
        </g>
        <g fontSize="19">
          <text x="563" y="65">POTENTIOMETER</text><text x="807" y="513">LED</text>
          <text transform="translate(724 120) rotate(180)">R2</text><text transform="translate(982 119) rotate(180)">SWITCH</text>
          <text transform="translate(1002 599) rotate(180)">BATTERY</text>
          <text transform="translate(75 97) rotate(-90)">JACK2</text><text transform="translate(58 515) rotate(-90)">JACK1</text>
          <text transform="translate(889 447) rotate(-90)">R3</text><text transform="translate(490 414) rotate(90)">OP−AMP</text>
        </g>
      </g>
    </svg>
  );
}

function BottomBoard() {
  const holes: [number, number][] = [[48, 23], [58, 23], [67, 23], [118, 28], [157, 28], [189, 24], [189, 34], [189, 43], [220, 120], [220, 130], [220, 139], [220, 149], [248, 120], [248, 130], [248, 139], [248, 149], [76, 124], [76, 163], [104, 178], [113, 178], [40, 188], [50, 188]];
  return (
    <svg viewBox="0 0 370 222" className="block w-full" role="img" aria-label="Bottom of board">
      <rect width="370" height="222" fill="#0c0014" /><rect x="1" y="1" width="368" height="220" fill="#310055" />
      <path d="M118 28V176M189 34H231L267 69V111L250 130M189 42H204V123L220 139M248 150H318" fill="none" stroke="#3a0a60" strokeWidth="1.500" />
      <path d="M245 117H251V123H245zM37 185H43V191H37z" fill="#b48c84" />
      {holes.map(([x, y]) => <circle key={x + "-" + y} cx={x} cy={y} r="2.300" fill="#111" stroke="#b99478" strokeWidth="1.300" />)}
      {[[304, 26], [330, 26], [310, 166], [335, 166]].map(([x, y]) => <circle key={x} cx={x} cy={y} r="3.500" fill="#000" />)}
    </svg>
  );
}

function HelpLink() {
  return <a href="#help" className="font-bold text-[#ff6120]">See help page. <FaLink className="inline size-3.5 -translate-y-0.5 rotate-90" /></a>;
}

function OshPark() {
  const field = "mt-1 block h-[39px] w-full rounded-[3px] border border-[#c4c4c4] px-2 text-[17px] font-medium text-black shadow-[inset_0_1px_2px_#ddd]";
  const serif = "font-['Liberation_Serif','Times_New_Roman',serif] text-[16px] text-[#111]";
  return (
    <div className="flex min-h-0 flex-1 bg-white font-['Lato',sans-serif] text-black">
      <div className="flex min-w-0 flex-1 flex-col border-b-3 border-[#310055]">
        <header className="h-[74px] shrink-0 border-b border-[#8b44a8] bg-linear-to-r from-[#4e1e5c] via-[#7a2498] to-[#4e1e5c] text-white">
          <div className="mx-auto flex h-full max-w-[930px] items-center pt-1">
            <a href="#home" className="text-[25px] leading-none">OSH<span className="font-black">PARK</span></a>
            <nav className="ml-9 flex gap-[38px] pt-1.5 text-[16px] font-bold">
              <a href="#about">ABOUT US</a><a href="#services">SERVICES</a><a href="#support">SUPPORT</a><a href="#sharing">SHARING</a>
            </nav>
            <a href="#cart" aria-label="Cart" className="mb-1 ml-auto"><FaShoppingCart className="size-4" /></a>
            <a href="#login" className="ml-[15px] text-[16px] font-bold">LOG IN</a>
          </div>
        </header>
        <div className="mx-auto flex w-full max-w-[930px] min-h-0 flex-1 gap-[30px]">
          <main className="min-w-0 flex-1">
            <h1 className="mt-2 text-[41px] leading-[50px] text-[#310055]">About your board</h1>
            <div className="mt-4 text-[17px] leading-8 text-[#444] italic">
              <p>We detected a 2 layer board of 3.94 x 2.37 inches (100.1 x 60.1mm)</p><p>3 boards will cost $46.60</p>
            </div>
            <label htmlFor="bn" className="mt-3.5 block text-[15px] leading-5">Board name</label>
            <input id="bn" defaultValue="Gerber_PCB_Week5_PCBDesign_2022-12-05" className={field} />
            <label htmlFor="em" className="mt-[17px] block text-[15px] leading-5">Email</label>
            <input id="em" defaultValue="twkelly@uw.edu" className={field} />
            <h2 className="mt-4 text-[21px] leading-[26px]">Notes</h2>
            <section className={serif}>
              <h3 className="mt-3 flex items-center gap-4 pl-4 font-bold text-[#008000]"><FaInfoCircle className="size-7" />Processing information</h3>
              <ul className="mt-5 list-disc pl-10 leading-[26px]">
                <li>Processing Gerber_PCB_Week5_PCBDesign_2022-12-05.zip as generic ZIP file.</li>
                <li>2 layer board of 3.94x2.37 inches.</li>
                <li>Your project contains 3 drill files, we've merged them. ["Drill_PTH_Through_Via.DRL", "Drill_PTH_Through.DRL", "Drill_NPTH_Through.DRL"]</li>
              </ul>
            </section>
            <hr className="mt-[18px] border-[#c8c8c8]" />
            <section className={serif}>
              <h3 className="mt-5 flex items-center gap-3.5 pl-3.5 font-bold text-[#ffa500]"><FaExclamationTriangle className="size-8" />Warning (non-critical)</h3>
              <ul className="mt-5 list-disc pl-10 leading-[26px]">
                <li>File is not valid drill file: How-to-order-PCB.txt <HelpLink /></li>
                <li>We couldn't find a bottom silkscreen layer. <HelpLink /></li>
              </ul>
            </section>
            <hr className="mt-[59px] border-[#c8c8c8]" />
            <div className="mt-7 flex justify-between pr-1 text-[15px] font-black">
              <button className="flex h-[43px] w-[97px] items-center justify-center gap-2 rounded-[20px] border-2 border-black">Cancel<FaTimes className="size-3" /></button>
              <button className="flex h-[43px] w-[114px] items-center justify-center gap-2 rounded-[20px] bg-[#ff6120] text-white">Continue<FaArrowRight className="size-3.5" /></button>
            </div>
          </main>
          <aside className="w-[370px] shrink-0 pt-[71px] text-center text-[17px] text-[#444] italic">
            <figure><TopBoard /><figcaption className="h-10 leading-6">Top</figcaption></figure>
            <figure><BottomBoard /><figcaption className="h-10 leading-6">Bottom</figcaption></figure>
          </aside>
        </div>
      </div>
      <div className="flex w-4 shrink-0 flex-col items-center bg-[#f0f0f0] text-[#888]">
        <ChevronUp className="h-[15px] w-3" /><span className="h-[540px] w-full bg-[#cdcdcd]" /><ChevronDown className="mt-auto h-[15px] w-3 text-[#444]" />
      </div>
    </div>
  );
}

/* ---------- desktop ---------- */

const leftTabs: Tab[] = [
  ["uw", "Das"], ["uw", "Hor"], ["ed", "(8) E"], ["cloud", "Ea"], ["in", "(5) S"], ["hh", "Har"], ["g", "202"], ["unlv", "Thir"],
  ["ene", "Ene"], ["leaf", "Intr"], ["tri", "Spri"], ["gh", "tug"], ["in", "(5) I"], ["log", "Log"], ["sheet", "Inte"],
  ["square", "Spri"], ["hh", "Pos"], ["globe", "7. D"], ["leaf", "Intr"], ["spring", "Spri"], ["mongo", "Dat"], ["mongo", "Das"],
  ["mongo", "Rea"], ["bull", "Bull"], ["lc", "(7) A"], ["gmail", "Rec"], ["gmail", "Inb"], ["uw", "Ema"], ["globe", "e-si"],
  ["uw", "Das"], ["care", "Care"],
].map(([icon, label], n) => ({ icon, label, active: n === 3 }));

const rightTabs: Tab[] = [
  { icon: "uw", label: "E E 201 A Au 22: Computer" },
  { icon: "osh", label: "OSH Park ~", active: true },
  { icon: "yt", label: "(6) Super Mario Galaxy -", audio: true },
];

export default function App() {
  return (
    <div className="flex h-screen bg-black">
      <div className="flex min-w-0 flex-1 flex-col pt-[5px]">
        <Browser tabs={leftTabs} navDim host="easyeda.com" path="/editor#id=144510ab52c14bca8fa40e87f3820fde|daaf4dc7cd5d40bb91f0b8050cfdac69">
          <EasyEda />
        </Browser>
        <Taskbar />
      </div>
      <div className="flex min-w-0 flex-1 flex-col pb-[5px]">
        <Browser tabs={rightTabs} wide host="oshpark.com" path="/uploads/E9bNWGlc">
          <OshPark />
        </Browser>
        <Taskbar tray />
      </div>
    </div>
  );
}
